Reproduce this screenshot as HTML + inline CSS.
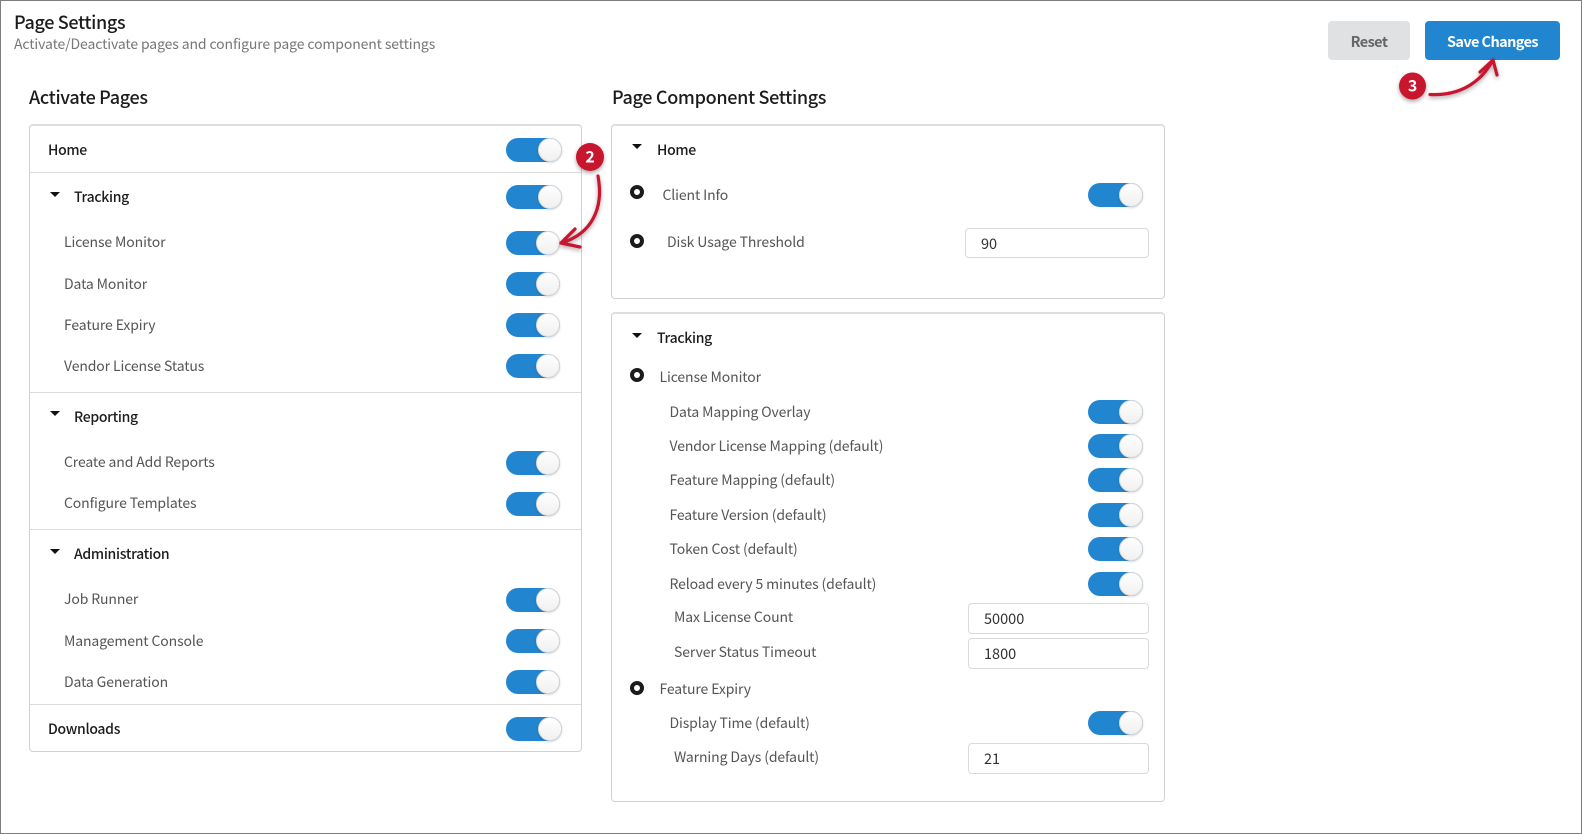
<!DOCTYPE html>
<html><head><meta charset="utf-8"><style>
html,body{margin:0;padding:0;background:#fff}
body{width:1582px;height:834px;position:relative;overflow:hidden;font-family:"Source Sans Pro","Noto Sans CJK SC","Liberation Sans",sans-serif;font-size:14px;letter-spacing:-.12px;color:#555}
.abs,.t,.tg,.p,.d,.c,.b,.i{position:absolute}
.frame{left:0;top:0;width:1580px;height:832px;border:1px solid #7d7d7d}
.t{white-space:nowrap;line-height:20px;height:20px}
.s{font-weight:500;color:#1c1c1c;letter-spacing:-.3px}
.h{font-size:18px;font-weight:500;color:#1c1c1c;letter-spacing:-.33px}
.p{border:1px solid #d0d1d2;border-top:2px solid #dcddde;border-radius:4px;box-sizing:border-box;background:#fff}
.d{height:1px;background:#dcdcdc;left:30px;width:551px}
.c{width:0;height:0;border-left:5px solid transparent;border-right:5px solid transparent;border-top:5px solid #111}
.b{width:14px;height:14px;box-sizing:border-box;border:4.5px solid #1b1b1b;border-radius:50%;background:#fff;left:630px}
.tg{height:24px;border-radius:12px;background:#2185d0}
.tg:after{content:"";position:absolute;right:0;top:0;width:24px;height:24px;box-sizing:border-box;border-radius:50%;background:linear-gradient(#fff,#f0f0f0);border:1px solid #dadada;box-shadow:0 1px 2px rgba(0,0,0,.15)}
.a{left:506px;width:56px}.e{left:506px;width:54px}.r{left:1088px;width:55px}
.i{box-sizing:border-box;border:1px solid #d9dadb;border-radius:4px;height:30px;line-height:30px;background:#fff;color:#333;font-size:14.5px;letter-spacing:0}
.btn{position:absolute;top:21px;height:39px;line-height:41px;text-align:center;border-radius:4px;font-weight:700;font-size:14.500px;letter-spacing:-.6px}
</style></head><body>
<div class="abs frame"></div>
<div class="t" style="left:14px;top:12px;font-size:18px;font-weight:500;color:#1c1c1c;letter-spacing:-.35px">Page Settings</div>
<div class="t" style="left:14px;top:34px;color:#777">Activate/Deactivate pages and configure page component settings</div>
<div class="btn" style="left:1328px;width:82px;background:#e0e1e2;color:#666">Reset</div>
<div class="btn" style="left:1425px;width:135px;background:#2185d0;color:#fff">Save Changes</div>
<div class="t h" style="left:29px;top:87px">Activate Pages</div>
<div class="t h" style="left:612px;top:87px">Page Component Settings</div>

<div class="p" style="left:29px;top:124px;width:553px;height:628px"></div>
<div class="d" style="top:172px"></div><div class="d" style="top:392px"></div><div class="d" style="top:529px"></div><div class="d" style="top:704px"></div>
<div class="t s" style="left:48px;top:140px">Home</div><div class="tg a" style="top:138px"></div>
<div class="c" style="left:50px;top:192px"></div><div class="t s" style="left:74px;top:187px">Tracking</div><div class="tg a" style="top:185px"></div>
<div class="t" style="left:64px;top:232px">License Monitor</div><div class="tg e" style="top:231px"></div>
<div class="t" style="left:64px;top:274px">Data Monitor</div><div class="tg e" style="top:272px"></div>
<div class="t" style="left:64px;top:315px">Feature Expiry</div><div class="tg e" style="top:313px"></div>
<div class="t" style="left:64px;top:356px">Vendor License Status</div><div class="tg e" style="top:354px"></div>
<div class="c" style="left:50px;top:411px"></div><div class="t s" style="left:74px;top:407px">Reporting</div>
<div class="t" style="left:64px;top:452px">Create and Add Reports</div><div class="tg e" style="top:451px"></div>
<div class="t" style="left:64px;top:493px">Configure Templates</div><div class="tg e" style="top:492px"></div>
<div class="c" style="left:50px;top:549px"></div><div class="t s" style="left:74px;top:544px">Administration</div>
<div class="t" style="left:64px;top:589px">Job Runner</div><div class="tg e" style="top:588px"></div>
<div class="t" style="left:64px;top:631px">Management Console</div><div class="tg e" style="top:629px"></div>
<div class="t" style="left:64px;top:672px">Data Generation</div><div class="tg e" style="top:670px"></div>
<div class="t s" style="left:48px;top:719px">Downloads</div><div class="tg a" style="top:717px"></div>

<div class="p" style="left:611px;top:124px;width:554px;height:175px"></div>
<div class="c" style="left:632px;top:144px"></div><div class="t s" style="left:657px;top:140px">Home</div>
<div class="b" style="top:185px"></div><div class="t" style="left:662.500px;top:185px">Client Info</div><div class="tg r" style="top:183px"></div>
<div class="b" style="top:234px"></div><div class="t" style="left:667px;top:232px">Disk Usage Threshold</div>
<div class="i" style="left:965px;top:228px;width:184px;padding-left:15px">90</div>

<div class="p" style="left:611px;top:312px;width:554px;height:490px"></div>
<div class="c" style="left:632px;top:333px"></div><div class="t s" style="left:657px;top:328px">Tracking</div>
<div class="b" style="top:368px"></div><div class="t" style="left:659.500px;top:367px">License Monitor</div>
<div class="t" style="left:669.500px;top:402px">Data Mapping Overlay</div><div class="tg r" style="top:400px"></div>
<div class="t" style="left:669.500px;top:436px">Vendor License Mapping (default)</div><div class="tg r" style="top:434px"></div>
<div class="t" style="left:669.500px;top:470px">Feature Mapping (default)</div><div class="tg r" style="top:468px"></div>
<div class="t" style="left:669.500px;top:505px">Feature Version (default)</div><div class="tg r" style="top:503px"></div>
<div class="t" style="left:669.500px;top:539px">Token Cost (default)</div><div class="tg r" style="top:537px"></div>
<div class="t" style="left:669.500px;top:574px">Reload every 5 minutes (default)</div><div class="tg r" style="top:572px"></div>
<div class="t" style="left:674px;top:607px">Max License Count</div>
<div class="i" style="left:968px;top:603px;width:181px;height:31px;padding-left:15px">50000</div>
<div class="t" style="left:674px;top:642px">Server Status Timeout</div>
<div class="i" style="left:968px;top:638px;width:181px;height:31px;padding-left:15px">1800</div>
<div class="b" style="top:681px"></div><div class="t" style="left:659.500px;top:679px">Feature Expiry</div>
<div class="t" style="left:669.500px;top:713px">Display Time (default)</div><div class="tg r" style="top:711px"></div>
<div class="t" style="left:674px;top:747px">Warning Days (default)</div>
<div class="i" style="left:968px;top:743px;width:181px;height:31px;padding-left:15px">21</div>

<svg class="abs" style="left:0;top:0" width="1582" height="834" viewBox="0 0 1582 834">
<defs><filter id="sh" x="-40%" y="-40%" width="180%" height="180%"><feDropShadow dx="0" dy="2" stdDeviation="2" flood-color="#000" flood-opacity=".35"/></filter></defs>
<g fill="none" stroke="#c8132f" stroke-width="3.2" stroke-linecap="round" stroke-linejoin="round" filter="url(#sh)">
<path d="M598 176C604 208 592 234 561 243"/><path d="M575 229L561 243L580 247"/>
<path d="M1430 94.500C1458 96 1480 84 1493 60"/><path d="M1480 72L1493 60L1497 75"/>
</g>
<g filter="url(#sh)"><circle cx="590" cy="157" r="14" fill="#c8132f"/><circle cx="1412.500" cy="86" r="13.500" fill="#c8132f"/></g>
<g fill="#fff" font-family="'Noto Sans CJK SC','Liberation Sans',sans-serif" font-size="16" font-weight="700" text-anchor="middle">
<text x="590" y="162.500">2</text><text x="1412.500" y="91.500">3</text></g>
</svg>
</body></html>
